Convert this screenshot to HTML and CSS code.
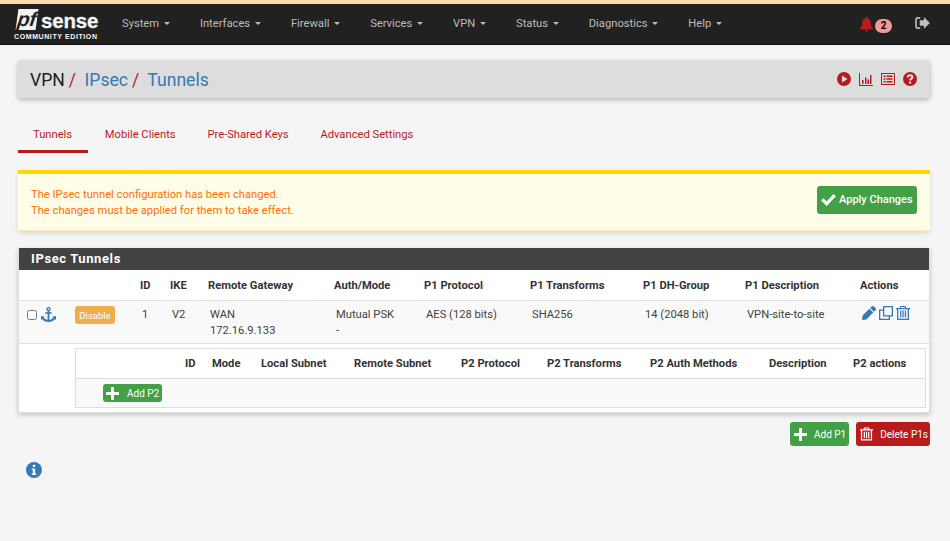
FILE: index.html
```html
<!DOCTYPE html>
<html>
    <head>
        <meta charset="utf-8">
        <title>VPN: IPsec: Tunnels</title>
        <link rel="stylesheet" href="styles.css">
    </head>
    <body>
        <nav class="navbar">
            <a class="logo">
                <span class="logo-top"><span class="logo-pf"><span>pf</span></span><span class="logo-sense">sense</span></span>
                <span class="logo-sub">COMMUNITY EDITION</span>
            </a>
            <ul class="menu">
                <li>System <i class="caret"></i></li>
                <li>Interfaces <i class="caret"></i></li>
                <li>Firewall <i class="caret"></i></li>
                <li>Services <i class="caret"></i></li>
                <li>VPN <i class="caret"></i></li>
                <li>Status <i class="caret"></i></li>
                <li>Diagnostics <i class="caret"></i></li>
                <li>Help <i class="caret"></i></li>
            </ul>
            <div class="nav-right">
                <svg class="bell" viewBox="0 0 14 16"><path d="M7 0c.7 0 1.1.5 1.1 1.2C10.600 1.700 11.600 3.700 11.600 6.200c0 3 .9 4.600 2.400 6V13H0v-.8c1.500-1.400 2.400-3 2.400-6 0-2.500 1-4.500 3.500-5C5.900.5 6.300 0 7 0zM5.200 14h3.600C8.600 15 7.900 15.600 7 15.600S5.400 15 5.200 14z"/></svg>
                <span class="badge">2</span>
                <svg class="logout" viewBox="0 0 16 13"><path d="M5.500 1H3C1.800 1 1 1.800 1 3v7c0 1.200.8 2 2 2h2.500" fill="none" stroke="currentColor" stroke-width="1.800"/><path d="M9.500 0L16 6.500 9.500 13V9.500H5v-6h4.500z"/></svg>
            </div>
        </nav>

        <main class="page">
            <header class="title-bar">
                <h1 class="crumbs">
                    <span>VPN</span><span class="slash">/</span>
                    <a>IPsec</a><span class="slash">/</span>
                    <a>Tunnels</a>
                </h1>
                <div class="title-icons">
                    <svg viewBox="0 0 14 14"><circle cx="7" cy="7" r="7"/><path class="cut" d="M5 3.500L10.500 7 5 10.500z"/></svg>
                    <svg viewBox="0 0 14 14"><path d="M0 1h1v11.900h14V14H0z"/><path d="M3 8h1.500v4H3zM6 5.500h1.500V12H6zM8.500 7.500H10V12H8.500zM11 3h1.500v9H11z"/></svg>
                    <svg viewBox="0 0 14 14"><path fill-rule="evenodd" d="M0 1h14v12H0zM1 2v10h12V2z"/><path d="M2.500 3.500h2v1.500h-2zM5.500 3.500h6v1.500h-6zM2.500 6.300h2v1.500h-2zM5.500 6.300h6v1.500h-6zM2.500 9h2v1.500h-2zM5.500 9h6v1.500h-6z"/></svg>
                    <svg viewBox="0 0 14 14"><circle cx="7" cy="7" r="7"/><path class="cut-line" d="M4.700 5.400C4.800 4 5.800 3.300 7.100 3.300c1.300 0 2.300.8 2.300 1.900 0 1.700-2.300 1.700-2.300 3.400"/><rect class="cut" x="6" y="9.600" width="2.200" height="2"/></svg>
                </div>
            </header>

            <ul class="tabs">
                <li class="active">Tunnels</li>
                <li>Mobile Clients</li>
                <li>Pre-Shared Keys</li>
                <li>Advanced Settings</li>
            </ul>

            <div class="alert">
                <p>The IPsec tunnel configuration has been changed.<br>The changes must be applied for them to take effect.</p>
                <button class="btn btn-apply">
                    <svg class="icon-check" viewBox="0 0 16 13"><path d="M0 7l2.500-2.500L6 8l7.500-8L16 2.500 6 13z"/></svg>
                    Apply Changes
                </button>
            </div>

            <section class="panel">
                <h2 class="panel-heading">IPsec Tunnels</h2>
                <table class="p1-table">
                    <colgroup>
                        <col class="c-check"><col class="c-toggle"><col class="c-id"><col class="c-ike"><col class="c-gw"><col class="c-auth"><col class="c-proto"><col class="c-trans"><col class="c-dh"><col class="c-desc"><col>
                    </colgroup>
                    <thead>
                        <tr>
                            <th></th><th></th><th>ID</th><th>IKE</th><th>Remote Gateway</th><th>Auth/Mode</th><th>P1 Protocol</th><th>P1 Transforms</th><th>P1 DH-Group</th><th>P1 Description</th><th>Actions</th>
                        </tr>
                    </thead>
                    <tbody>
                        <tr class="p1-row">
                            <td class="plain">
                                <span class="checks">
                                    <input type="checkbox" class="check">
                                    <svg class="anchor" viewBox="0 0 16 16"><path d="M8 0a2.200 2.200 0 0 1 1 4.200V5.500h2.500v1.800H9v6.500c2-.2 3.500-1.200 4-2.500L11.800 10.500 16 9.500v4.300l-1.200-1C13.600 14.800 11 16 8 16s-5.600-1.200-6.800-3.200L0 13.800V9.500l4.200 1L3 11.300c.5 1.300 2 2.300 4 2.500V7.300H4.500V5.500H7V4.200A2.200 2.200 0 0 1 8 0zm0 1.300a.9.9 0 1 0 0 1.800.9.9 0 0 0 0-1.800z"/></svg>
                                </span>
                            </td>
                            <td class="plain"><button class="btn btn-disable">Disable</button></td>
                            <td>1</td>
                            <td>V2</td>
                            <td>WAN<br>172.16.9.133</td>
                            <td>Mutual PSK<br>-</td>
                            <td>AES (128 bits)</td>
                            <td>SHA256</td>
                            <td>14 (2048 bit)</td>
                            <td>VPN-site-to-site</td>
                            <td class="plain">
                                <span class="actions">
                                    <svg viewBox="0 0 14 14"><path d="M10.900 0c.4 0 .8.200 1.100.5l1.500 1.500c.3.300.5.700.5 1.100s-.2.800-.5 1.100L12 5.800 8.200 2l1.600-1.500c.3-.3.700-.5 1.100-.5zM7.400 2.800l3.800 3.800-6.800 6.800L0 14l.6-4.400z"/></svg>
                                    <svg viewBox="0 0 14 14"><path fill-rule="evenodd" d="M4 0h10v10.500h-3V14H0V3.500h4zM5.300 1.300v7.900h7.400V1.300zM1.300 4.800v7.900h8.400v-2.200H4V4.800z"/></svg>
                                    <svg viewBox="0 0 14 14"><path fill-rule="evenodd" d="M4.500 0h5l1 2H14v1.300h-1V14H1V3.300H0V2h3.500zM5.300 1l-.5 1h4.400l-.5-1zM2.300 3.300v9.400h9.400V3.300zM4 4.500h1.300v7H4zM6.400 4.500h1.300v7H6.400zM8.800 4.500h1.300v7H8.800z"/></svg>
                                </span>
                            </td>
                        </tr>
                        <tr class="p2-row">
                            <td colspan="11" class="p2-cell">
                                <table class="p2-table">
                                    <colgroup>
                                        <col class="c2-add"><col class="c2-id"><col class="c2-mode"><col class="c2-local"><col class="c2-remote"><col class="c2-proto"><col class="c2-trans"><col class="c2-auth"><col class="c2-desc"><col>
                                    </colgroup>
                                    <thead>
                                        <tr>
                                            <th></th><th>ID</th><th>Mode</th><th>Local Subnet</th><th>Remote Subnet</th><th>P2 Protocol</th><th>P2 Transforms</th><th>P2 Auth Methods</th><th>Description</th><th>P2 actions</th>
                                        </tr>
                                    </thead>
                                    <tbody>
                                        <tr>
                                            <td colspan="10" class="add-cell">
                                                <button class="btn btn-add">
                                                    <svg class="icon-plus" viewBox="0 0 13 13"><path d="M5 0h3v5h5v3H8v5H5V8H0V5h5z"/></svg>
                                                    Add P2
                                                </button>
                                            </td>
                                        </tr>
                                    </tbody>
                                </table>
                            </td>
                        </tr>
                    </tbody>
                </table>
            </section>

            <div class="bottom-btns">
                <button class="btn btn-add btn-big">
                    <svg class="icon-plus" viewBox="0 0 13 13"><path d="M5 0h3v5h5v3H8v5H5V8H0V5h5z"/></svg>
                    Add P1
                </button>
                <button class="btn btn-delete btn-big">
                    <svg class="icon-trash" viewBox="0 0 14 14"><path fill-rule="evenodd" d="M4.500 0h5l1 2H14v1.300h-1V14H1V3.300H0V2h3.500zM5.300 1l-.5 1h4.400l-.5-1zM2.300 3.300v9.400h9.400V3.300zM4 4.500h1.300v7H4zM6.400 4.500h1.300v7H6.400zM8.800 4.500h1.300v7H8.800z"/></svg>
                    Delete P1s
                </button>
            </div>

            <svg class="info" viewBox="0 0 16 16"><circle cx="8" cy="8" r="8"/><path class="cut" d="M6.800 2.800h2.400v2.200H6.800zM5.800 6.400h3.400v5h1v1.600H5.800v-1.600h1v-3.400h-1z"/></svg>
        </main>
    </body>
</html>
```

FILE: styles.css
```css
* {
    box-sizing: border-box;
}

body {
    margin: 0;
    height: 541px;
    overflow: hidden;
    background-color: #f5f5f5;
    font-family: Roboto, sans-serif;
    font-size: 11.2px;
    color: #424242;
}

ul {
    list-style: none;
    margin: 0;
    padding: 0;
}

button {
    font-family: inherit;
}

/* navbar */
.navbar {
    display: flex;
    align-items: center;
    height: 45px;
    padding-left: 14px;
    background-color: #212121;
    border-top: 4px solid #ffdcb0;
    border-bottom: 1px solid #111;
}

.logo {
    display: flex;
    flex-direction: column;
    width: 85px;
}

.logo-top {
    display: flex;
    align-items: flex-end;
    height: 22px;
}

.logo-pf {
    width: 20px;
    height: 21px;
    margin: 0 4px 0 3px;
    background-color: #f2f2f2;
    transform: skewX(-8deg);
    text-align: center;
}

.logo-pf span {
    font-family: "Liberation Sans", sans-serif;
    font-size: 20px;
    line-height: 21px;
    font-weight: bold;
    font-style: italic;
    color: #212121;
}

.logo-sense {
    font-family: "Liberation Sans", sans-serif;
    font-size: 20.500px;
    line-height: 19px;
    font-weight: bold;
    letter-spacing: -0.2px;
    color: #f5f5f5;
    -webkit-text-stroke: 0.3px #f5f5f5;
}

.logo-sub {
    margin-top: 3px;
    font-family: "Liberation Sans", sans-serif;
    font-size: 7px;
    line-height: 8px;
    font-weight: bold;
    letter-spacing: 0.6px;
    color: #f5f5f5;
    white-space: nowrap;
}

.menu {
    display: flex;
    margin-left: 23px;
    padding-bottom: 2px;
    color: #bdbdbd;
}

.menu li {
    margin-right: 30px;
    white-space: nowrap;
}

.caret {
    display: inline-block;
    width: 0;
    height: 0;
    margin-left: 2px;
    vertical-align: middle;
    border-top: 3px solid #bdbdbd;
    border-left: 3px solid transparent;
    border-right: 3px solid transparent;
}

.nav-right {
    display: flex;
    align-items: center;
    margin-left: auto;
    padding-right: 20px;
}

.bell {
    width: 13px;
    height: 15px;
    fill: #b71c1c;
}

.badge {
    width: 17px;
    height: 14px;
    margin-left: 2px;
    margin-top: 4px;
    border-radius: 7px;
    background-color: #ef9a9a;
    color: #000;
    font-size: 10px;
    font-weight: bold;
    line-height: 14px;
    text-align: center;
}

.logout {
    width: 15px;
    height: 12px;
    margin-left: 23px;
    margin-top: -3px;
    fill: #bdbdbd;
    color: #bdbdbd;
}

/* page */
.page {
    padding: 15px 20px 0 18px;
}

.title-bar {
    display: flex;
    align-items: center;
    justify-content: space-between;
    height: 38px;
    padding: 0 13px 0 12px;
    background-color: #ddd;
    border-radius: 3px;
    box-shadow: 0 2px 5px rgba(0, 0, 0, 0.26);
}

.crumbs {
    margin: 0;
    padding-top: 2px;
    font-size: 17.600px;
    font-weight: normal;
    color: #212121;
}

.crumbs a {
    color: #337ab7;
}

.slash {
    margin: 0 4px 0 4px;
    color: #b71c1c;
}

.title-icons {
    display: flex;
    gap: 8px;
}

.title-icons svg {
    width: 14px;
    height: 14px;
    fill: #b71c1c;
}

.cut {
    fill: #ddd;
}

.cut-line {
    fill: none;
    stroke: #ddd;
    stroke-width: 2;
}

.tabs {
    display: flex;
    margin-top: 20px;
    color: #b71c1c;
}

.tabs li {
    height: 35px;
    margin-right: 1.800px;
    padding: 10px 15px 0;
    border-bottom: 3px solid transparent;
}

.tabs li.active {
    width: 70px;
    border-bottom-color: #b71c1c;
}

.alert {
    display: flex;
    align-items: center;
    justify-content: space-between;
    height: 61px;
    margin-top: 17px;
    padding: 0 13px;
    background-color: #fffde7;
    border-top: 4px solid #ffd600;
    border-bottom: 1px solid #ffecb3;
    box-shadow: 0 2px 5px rgba(0, 0, 0, 0.12);
}

.alert p {
    margin: 2px 0 0;
    color: #ff6f00;
    line-height: 16px;
}

.btn {
    display: inline-flex;
    align-items: center;
    border: 1px solid transparent;
    border-radius: 3px;
    color: #fff;
    white-space: nowrap;
}

.btn-apply {
    width: 100px;
    height: 28px;
    margin-bottom: 5px;
    padding: 0 3px;
    gap: 3px;
    background-color: #43a047;
    font-size: 11px;
    font-weight: 500;
}

.icon-check {
    width: 15px;
    height: 12px;
    fill: #fff;
}

/* tables */
.panel {
    margin-top: 17px;
    background-color: #fff;
    border: 1px solid #ddd;
    border-top: 0;
    box-shadow: 0 2px 5px rgba(0, 0, 0, 0.2);
}

.panel-heading {
    height: 22px;
    margin: 0;
    padding-left: 12px;
    background-color: #424242;
    color: #fff;
    font-size: 13px;
    line-height: 22px;
    font-weight: bold;
    letter-spacing: 0.6px;
}

table {
    width: 100%;
    table-layout: fixed;
    border-collapse: separate;
    border-spacing: 0;
    font-size: 11.200px;
}

th {
    padding: 0 0 0 8px;
    font-weight: bold;
    text-align: left;
    color: #333;
    white-space: nowrap;
}

td {
    padding: 6px 0 0 10px;
    vertical-align: top;
    line-height: 16px;
    white-space: nowrap;
}

td.plain {
    padding: 5px 0 0 8px;
}

.p1-table > thead th {
    height: 31px;
    padding-top: 1px;
    border-bottom: 1px solid #ddd;
}

.p1-row td {
    height: 43px;
    background-color: #f9f9f9;
    border-bottom: 1px solid #ddd;
}

.c-check { width: 48px; }
.c-toggle { width: 65px; }
.c-id { width: 30px; }
.c-ike { width: 38px; }
.c-gw { width: 126px; }
.c-auth { width: 90px; }
.c-proto { width: 106px; }
.c-trans { width: 113px; }
.c-dh { width: 102px; }
.c-desc { width: 115px; }

.checks {
    display: flex;
    align-items: center;
    gap: 4px;
    padding-top: 1px;
}

.check {
    width: 10px;
    height: 10px;
    margin: 0;
}

.anchor {
    width: 15px;
    height: 15px;
    fill: #337ab7;
}

.btn-disable {
    justify-content: center;
    width: 40px;
    height: 18px;
    padding: 0;
    background-color: #f0ad4e;
    font-size: 9.500px;
}

.actions {
    display: flex;
    gap: 3px;
    padding-left: 2px;
}

.actions svg {
    width: 14px;
    height: 14px;
    fill: #337ab7;
}

td.p2-cell {
    padding: 4px 3px 4px 56px;
}

.p2-table {
    border: 1px solid #ddd;
}

.p2-table th {
    height: 30px;
    padding-top: 1px;
    border-bottom: 1px solid #ddd;
}

.c2-add { width: 101px; }
.c2-id { width: 27px; }
.c2-mode { width: 49px; }
.c2-local { width: 93px; }
.c2-remote { width: 107px; }
.c2-proto { width: 86px; }
.c2-trans { width: 103px; }
.c2-auth { width: 119px; }
.c2-desc { width: 84px; }

td.add-cell {
    height: 28px;
    padding: 5px 0 0 27px;
    background-color: #f9f9f9;
}

.btn-add {
    height: 18px;
    padding: 0 2px;
    background-color: #43a047;
    font-size: 10px;
    gap: 8px;
}

.icon-plus {
    width: 13px;
    height: 13px;
    fill: #fff;
}

.bottom-btns {
    display: flex;
    justify-content: flex-end;
    gap: 7px;
    margin-top: 9px;
}

.btn-big {
    height: 24px;
    padding: 0 2px 0 3px;
    gap: 7px;
}

.btn-delete {
    padding-right: 1px;
    background-color: #b71c1c;
    font-size: 10px;
}

.icon-trash {
    width: 13px;
    height: 16px;
    fill: #fff;
}

.info {
    display: block;
    width: 16px;
    height: 16px;
    margin: 16px 0 0 8px;
    fill: #337ab7;
}

.info .cut {
    fill: #f5f5f5;
}
```
